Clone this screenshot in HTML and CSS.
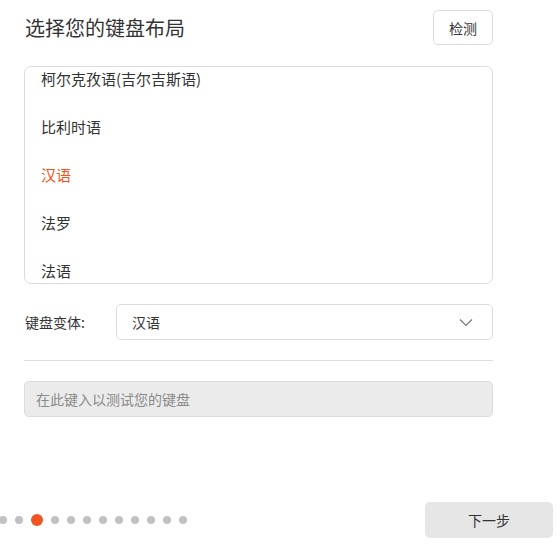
FILE: index.html
```html
<!DOCTYPE html>
<html lang="zh-CN">
<head>
<meta charset="utf-8">
<link rel="stylesheet" href="styles.css">
</head>
<body>
<div class="page">
  <div class="header">
    <h1 class="title">选择您的键盘布局</h1>
    <button class="detect">检测</button>
  </div>
  <div class="list">
    <ul class="items">
      <li>柯尔克孜语(吉尔吉斯语)</li>
      <li>比利时语</li>
      <li class="active">汉语</li>
      <li>法罗</li>
      <li>法语</li>
    </ul>
  </div>
  <div class="variant">
    <span class="label">键盘变体:</span>
    <div class="select">
      <span>汉语</span>
      <svg class="chev" width="14" height="9" viewBox="0 0 14 9"><path d="M1 1.5 L7 7.5 L13 1.5" fill="none" stroke="#777" stroke-width="1.2"/></svg>
    </div>
  </div>
  <hr class="divider">
  <input class="test" type="text" placeholder="在此键入以测试您的键盘">
</div>
<div class="footer">
  <div class="dots">
    <span class="dot"></span><span class="dot"></span><span class="dot on"></span><span class="dot"></span><span class="dot"></span><span class="dot"></span><span class="dot"></span><span class="dot"></span><span class="dot"></span><span class="dot"></span><span class="dot"></span><span class="dot"></span>
  </div>
  <button class="next">下一步</button>
</div>
</body>
</html>
```
FILE: styles.css
```css
* { box-sizing: border-box; }
html, body { margin: 0; padding: 0; }
body {
  width: 560px;
  height: 548px;
  background: #fff;
  font-family: "Noto Sans CJK SC", "Noto Sans", sans-serif;
  color: #333;
  position: relative;
  overflow: hidden;
}
.page {
  width: 469px;
  margin-left: 24px;
  padding-top: 10px;
}
.header {
  display: flex;
  justify-content: space-between;
  align-items: center;
  height: 35px;
}
.title {
  margin: 0 0 0 1px;
  font-size: 20px;
  font-weight: normal;
  color: #333;
  line-height: 35px;
}
.detect {
  width: 60px;
  height: 35px;
  border: 1px solid #dcdcdc;
  border-radius: 5px;
  background: #fff;
  font-family: inherit;
  font-size: 14px;
  color: #333;
  padding: 0;
}
.list {
  margin-top: 21px;
  height: 218px;
  border: 1px solid #dcdcdc;
  border-radius: 7px;
  overflow: hidden;
}
.items {
  list-style: none;
  margin: -12px 0 0 0;
  padding: 0;
}
.items li {
  height: 48px;
  line-height: 48px;
  padding-left: 16px;
  font-size: 15px;
  color: #333;
}
.items li.active { color: #f05523; }
.variant {
  display: flex;
  align-items: center;
  margin-top: 20px;
  height: 36px;
}
.label {
  width: 92px;
  padding-left: 1px;
  font-size: 14px;
  color: #333;
}
.select {
  flex: 1;
  height: 36px;
  border: 1px solid #dcdcdc;
  border-radius: 5px;
  display: flex;
  align-items: center;
  justify-content: space-between;
  padding: 0 19px 0 15px;
  font-size: 14px;
  color: #333;
}
.chev { display: block; }
.divider {
  margin: 20px 0 0 0;
  border: 0;
  border-top: 1px solid #dedede;
  height: 0;
}
.test {
  display: block;
  width: 100%;
  margin-top: 20px;
  height: 36px;
  border: 1px solid #dcdcdc;
  border-radius: 5px;
  background: #ebebeb;
  padding: 0 11px;
  font-family: inherit;
  font-size: 14px;
  color: #333;
  outline: none;
}
.test::placeholder { color: #8a8a8a; }
.footer {
  position: absolute;
  left: 0;
  right: 0;
  top: 502px;
  height: 36px;
  display: flex;
  align-items: center;
  justify-content: space-between;
  padding-right: 7px;
}
.dots {
  display: flex;
  align-items: center;
  gap: 8px;
  margin-left: -1px;
}
.dot {
  width: 8px;
  height: 8px;
  border-radius: 50%;
  background: #c1c1c1;
}
.dot.on {
  width: 12px;
  height: 12px;
  background: #f05523;
}
.next {
  width: 128px;
  height: 36px;
  border: 0;
  border-radius: 5px;
  background: #e6e6e6;
  font-family: inherit;
  font-size: 14px;
  color: #333;
  padding: 0;
}
```
